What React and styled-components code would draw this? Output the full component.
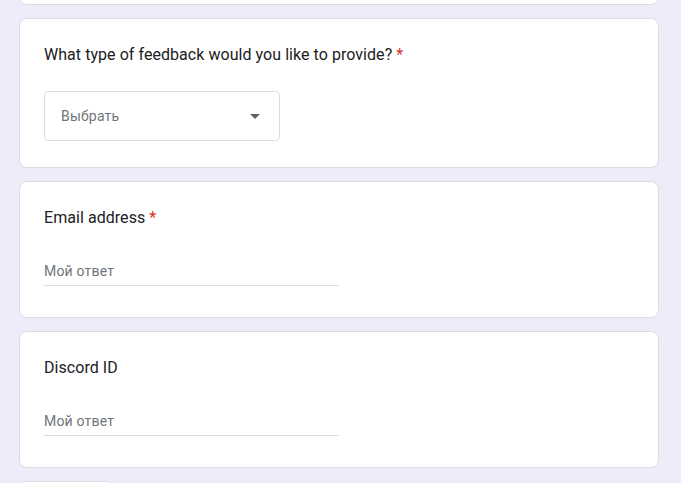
import React from "react";
import styled, { createGlobalStyle } from "styled-components";

const Global = createGlobalStyle`
  html, body { margin: 0; padding: 0; background: #f0ebf8; overflow: hidden; }
  body { font-family: Roboto, "Noto Sans", Arial, sans-serif; }
`;

const Page = styled.div`
  background: #f0ebf8;
  height: 483px;
  overflow: hidden;
  padding: 0 22px 0 19px;
`;

const Column = styled.div`
  width: 640px;
  display: flex;
  flex-direction: column;
  gap: 13px;
  margin-top: -95px;
`;

const Card = styled.section`
  box-sizing: border-box;
  background: #fff;
  border: 1px solid #dadce0;
  border-radius: 8px;
  padding: 24px 24px ${(p) => p.$pb || 24}px;
  min-height: ${(p) => p.$minH || 0}px;
`;

const Title = styled.div`
  font-size: 16px;
  line-height: 24px;
  letter-spacing: 0.05px;
  color: #202124;
`;

const Required = styled.span`
  color: #d93025;
  margin-left: 4px;
`;

const Select = styled.div`
  box-sizing: border-box;
  margin-top: 24px;
  width: 236px;
  height: 50px;
  border: 1px solid #dadce0;
  border-radius: 4px;
  display: flex;
  align-items: center;
  justify-content: space-between;
  padding: 0 19px 0 16px;
`;

const SelectText = styled.span`
  font-size: 14px;
  color: #70757a;
  letter-spacing: 0.2px;
`;

const Arrow = styled.span`
  width: 0;
  height: 0;
  border-left: 5px solid transparent;
  border-right: 5px solid transparent;
  border-top: 5px solid #5f6368;
`;

const Input = styled.div`
  margin-top: 31px;
  width: 295px;
  padding-bottom: 4px;
  border-bottom: 1px solid #dadce0;
  font-size: 14px;
  line-height: 20px;
  color: #70757a;
  letter-spacing: 0.2px;
`;

const NextButton = styled.div`
  box-sizing: border-box;
  width: 91px;
  height: 36px;
  background: #fff;
  border: 1px solid #dadce0;
  border-radius: 4px;
  margin-left: 1px;
`;

export default function App() {
  return (
    <Page>
      <Global />
      <Column>
        <Card $minH={100} />
        <Card $pb={26}>
          <Title>
            What type of feedback would you like to provide?<Required>*</Required>
          </Title>
          <Select>
            <SelectText>Выбрать</SelectText>
            <Arrow />
          </Select>
        </Card>
        <Card $pb={31}>
          <Title>
            Email address<Required>*</Required>
          </Title>
          <Input>Мой ответ</Input>
        </Card>
        <Card $pb={31}>
          <Title>Discord ID</Title>
          <Input>Мой ответ</Input>
        </Card>
        <NextButton />
      </Column>
    </Page>
  );
}
